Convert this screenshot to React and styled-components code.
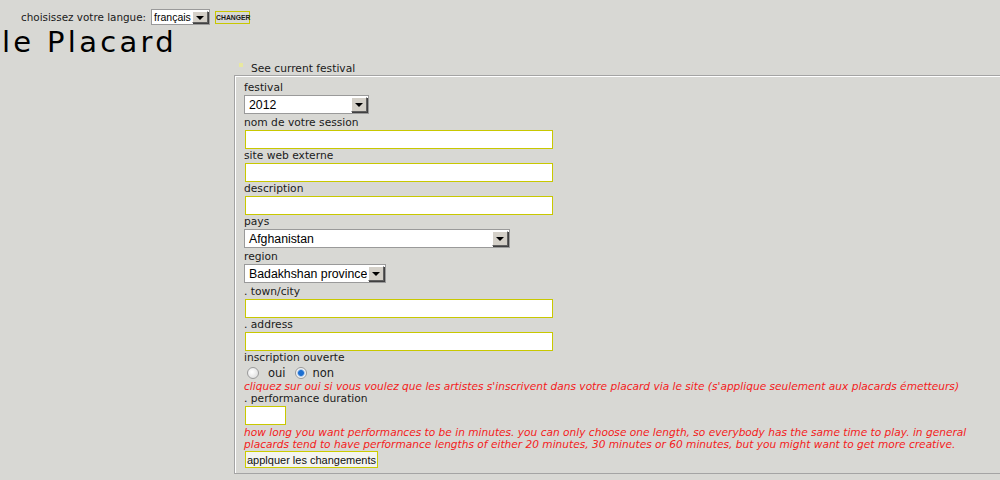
import React from "react"
import styled, { createGlobalStyle } from 'styled-components'

const Global = createGlobalStyle`
  html, body {
    margin: 0;
    padding: 0;
    background: #d8d8d4;
    overflow: hidden;
  }
  body {
    font-family: 'DejaVu Sans', Verdana, sans-serif;
    font-size: 10.7px;
    color: #1a1a1a;
  }
`

const LangBar = styled.div`
  display: flex;
  align-items: center;
  height: 20px;
  padding: 7px 0 0 21px;
  gap: 4px;
`

const LangLabel = styled.span`
  font-size: 10.4px;
  margin-right: 1px;
`

const Title = styled.h1`
  margin: 0;
  padding-left: 2px;
  font-family: 'DejaVu Sans', Verdana, sans-serif;
  font-weight: normal;
  font-size: 29px;
  letter-spacing: 3.3px;
  line-height: 30px;
  height: 30px;
  color: #000;
`

const SelectBox = styled.div`
  display: flex;
  align-items: stretch;
  box-sizing: border-box;
  width: ${p => p.w}px;
  height: ${p => p.h || 19}px;
  margin-bottom: ${p => p.mb || 0}px;
  border: 1px solid #9a9a9a;
  background: #fff;
  font-family: 'Liberation Sans', Arial, sans-serif;
  font-size: ${p => p.fs || 12.3}px;
  color: #000;
`

const SelectValue = styled.div`
  flex: 1;
  display: flex;
  align-items: center;
  padding-left: ${p => p.pl || 4}px;
  white-space: nowrap;
  overflow: hidden;
`

const SelectArrow = styled.div`
  width: ${p => p.w || 14}px;
  margin: 1px;
  background: #d4d0c8;
  border: 1px solid #fff;
  border-right-color: #606060;
  border-bottom-color: #606060;
  box-shadow: 1px 1px 0 #404040;
  display: flex;
  align-items: center;
  justify-content: center;
  &::after {
    content: '';
    border-left: 4px solid transparent;
    border-right: 4px solid transparent;
    border-top: 4px solid #000;
    margin-top: 1px;
  }
`

const SmallButton = styled.button`
  height: 13px;
  width: 35px;
  padding: 0;
  border: 1px solid #c8c800;
  background: #d8d8d4;
  font-family: 'Liberation Sans', Arial, sans-serif;
  font-size: 6.8px;
  font-weight: bold;
  color: #1a1a1a;
  margin-left: 1px;
`

const Content = styled.div`
  margin-left: 234px;
  margin-top: 5px;
`

const CurrentLink = styled.div`
  display: flex;
  align-items: center;
  height: 13px;
  padding-left: 5px;
  gap: 8px;
  &::before {
    content: '';
    width: 4px;
    height: 4px;
    background: #e8e8a0;
    margin-top: -8px;
  }
`

const Panel = styled.form`
  margin-top: 0;
  margin-right: -20px;
  border: 1px solid #a4a4a4;
  box-shadow: inset 1px 1px 0 #fff;
  padding: 5px 10px 5px 9px;
`

const Field = styled.div`
  display: flex;
  flex-direction: column;
  align-items: flex-start;
`

const Label = styled.label`
  height: 13px;
  line-height: 13px;
  margin-bottom: 1px;
`

const TextInput = styled.input`
  box-sizing: border-box;
  width: ${p => p.w || 308}px;
  height: 19px;
  margin: 0 0 0 1px;
  border: 1px solid #c8c800;
  background: #fff;
  outline: none;
`

const Radios = styled.div`
  display: flex;
  align-items: center;
  height: 15px;
  padding-left: 3px;
`

const Radio = styled.span`
  width: 12px;
  height: 12px;
  margin-right: ${p => p.checked ? 6 : 9}px;
  border-radius: 50%;
  box-sizing: border-box;
  border: 1px solid #9a9a9a;
  background: ${p => p.checked
    ? 'radial-gradient(circle, #1e6fd0 0 2.5px, #8fb8e8 3.2px, #f4f4f4 4.2px)'
    : 'radial-gradient(circle at 40% 40%, #fff, #d8d8d8)'};
`

const RadioText = styled.span`
  margin-right: 9px;
  font-size: 11.5px;
`

const Hint = styled.div`
  color: #f42020;
  font-style: italic;
  font-size: 10.6px;
  line-height: 12px;
  margin-top: ${p => p.mt || 0}px;
`

const SubmitButton = styled.button`
  margin: 1px 0 0 1px;
  height: 17px;
  width: 133px;
  padding: 0;
  border: 1px solid #cccc00;
  background: #f4f4f0;
  font-family: 'Liberation Sans', Arial, sans-serif;
  font-size: 11px;
  color: #111;
`

const Select = ({ w, value, fs }) => (
  <SelectBox w={w} fs={fs} mb={2}>
    <SelectValue>{value}</SelectValue>
    <SelectArrow />
  </SelectBox>
)

export default function App() {
  return (
    <>
      <Global />
      <LangBar>
        <LangLabel>choisissez votre langue:</LangLabel>
        <SelectBox w={59} h={16} fs={10.5}>
          <SelectValue pl={2}>français</SelectValue>
          <SelectArrow w={14} />
        </SelectBox>
        <SmallButton>CHANGER</SmallButton>
      </LangBar>
      <Title>le Placard</Title>
      <Content>
        <CurrentLink>See current festival</CurrentLink>
        <Panel onSubmit={e => e.preventDefault()}>
          <Field>
            <Label>festival</Label>
            <Select w={125} value="2012" />
          </Field>
          <Field>
            <Label>nom de votre session</Label>
            <TextInput />
          </Field>
          <Field>
            <Label>site web externe</Label>
            <TextInput />
          </Field>
          <Field>
            <Label>description</Label>
            <TextInput />
          </Field>
          <Field>
            <Label>pays</Label>
            <Select w={266} value="Afghanistan" />
          </Field>
          <Field>
            <Label>region</Label>
            <Select w={142} value="Badakhshan province" />
          </Field>
          <Field>
            <Label>. town/city</Label>
            <TextInput />
          </Field>
          <Field>
            <Label>. address</Label>
            <TextInput />
          </Field>
          <Field>
            <Label>inscription ouverte</Label>
            <Radios>
              <Radio />
              <RadioText>oui</RadioText>
              <Radio checked />
              <RadioText>non</RadioText>
            </Radios>
            <Hint>cliquez sur oui si vous voulez que les artistes s'inscrivent dans votre placard via le site (s'applique seulement aux placards émetteurs)</Hint>
          </Field>
          <Field>
            <Label>. performance duration</Label>
            <TextInput w={41} />
            <Hint mt={1}>
              how long you want performances to be in minutes. you can only choose one length, so everybody has the same time to play. in general<br />
              placards tend to have performance lengths of either 20 minutes, 30 minutes or 60 minutes, but you might want to get more creative.
            </Hint>
            <SubmitButton type="submit">applquer les changements</SubmitButton>
          </Field>
        </Panel>
      </Content>
    </>
  )
}
